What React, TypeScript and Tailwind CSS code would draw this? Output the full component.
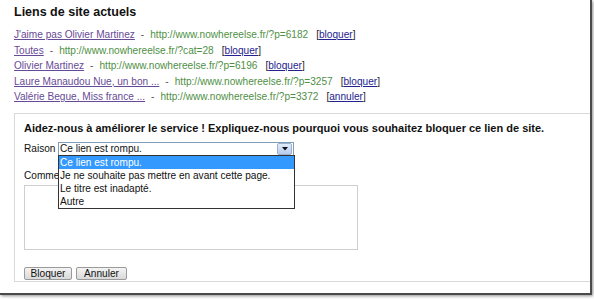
import React from "react";

const rows = [
  { t: "J'aime pas Olivier Martinez", u: "http://www.nowhereelse.fr/?p=6182", a: "bloquer" },
  { t: "Toutes", u: "http://www.nowhereelse.fr/?cat=28", a: "bloquer" },
  { t: "Olivier Martinez", u: "http://www.nowhereelse.fr/?p=6196", a: "bloquer" },
  { t: "Laure Manaudou Nue, un bon ...", u: "http://www.nowhereelse.fr/?p=3257", a: "bloquer" },
  { t: "Valérie Begue, Miss france ...", u: "http://www.nowhereelse.fr/?p=3372", a: "annuler" },
];

export default function App() {
  return (
    <div className="w-[594px] h-[299px] bg-white" style={{ fontFamily: '"Liberation Sans", Arial, sans-serif' }}>
      <div className="relative w-[592px] h-[295px] bg-white border-r-2 border-b-2 border-[#4a4a4a] shadow-[1px_1px_3px_rgba(0,0,0,0.45)] flex flex-col pl-[14px]">
        <div className="pt-[5px] text-[12.5px] font-bold text-[#111] leading-[15px]">Liens de site actuels</div>
        <div className="mt-[7px] flex flex-col text-[10.1px] leading-[15.6px]">
          {rows.map((r) => (
            <div key={r.u} className="flex items-center whitespace-nowrap">
              <span className="text-[#674a96] underline underline-offset-[1px]">{r.t}</span>
              <span className="mx-[6px] text-[#555]">-</span>
              <span className="text-[#4f8f45]">{r.u}</span>
              <span className="ml-[8px] text-[#222]">
                [<span className="text-[#23238f] underline underline-offset-[1px]">{r.a}</span>]
              </span>
            </div>
          ))}
        </div>
        <div className="mt-[8px] flex-1 mb-[11px] border-t border-l border-b border-[#d9d9d9] pl-[9px] pt-[7px] flex flex-col text-[10.1px] text-[#111]">
          <div className="font-bold text-[11px] leading-[14px] whitespace-nowrap">
            Aidez-nous à améliorer le service ! Expliquez-nous pourquoi vous souhaitez bloquer ce lien de site.
          </div>
          <div className="mt-[7px] flex items-center h-[14px]">
            <span className="w-[34px]">Raison</span>
            <div className="w-[236px] h-[14px] border border-[#7f9db9] bg-white flex items-center justify-between pl-[1px] pr-[1px]">
              <span className="leading-[12px]">Ce lien est rompu.</span>
              <div className="w-[15px] h-[12px] rounded-[2px] border border-[#9ab0cf] bg-gradient-to-b from-[#e3ecfb] to-[#b7cbee] flex items-center justify-center">
                <svg width="6" height="4" viewBox="0 0 6 4"><path d="M0 0h6L3 3.5z" fill="#111" /></svg>
              </div>
            </div>
          </div>
          <div className="mt-[13px] leading-[14px] w-[34px] overflow-hidden whitespace-nowrap">Commentaires</div>
          <div className="mt-[2px] w-[334px] h-[65px] border border-[#cfcfcf] bg-white" />
          <div className="mt-[17px] flex gap-[4px]">
            <button className="w-[48px] h-[13px] rounded-[2px] border border-[#9a9a9a] bg-gradient-to-b from-[#f4f4f4] to-[#d9d9d9] text-[10.1px] leading-[11px] text-[#111] flex items-center justify-center">Bloquer</button>
            <button className="w-[51px] h-[13px] rounded-[2px] border border-[#9a9a9a] bg-gradient-to-b from-[#f4f4f4] to-[#d9d9d9] text-[10.1px] leading-[11px] text-[#111] flex items-center justify-center">Annuler</button>
          </div>
        </div>
        <div className="absolute left-[58px] top-[155px] w-[237px] border border-[#333] bg-white text-[10.1px] leading-[13px] text-[#111]">
          <div className="bg-[#3399ff] text-white pl-[1px]">Ce lien est rompu.</div>
          <div className="pl-[1px]">Je ne souhaite pas mettre en avant cette page.</div>
          <div className="pl-[1px]">Le titre est inadapté.</div>
          <div className="pl-[1px]">Autre</div>
        </div>
      </div>
    </div>
  );
}
